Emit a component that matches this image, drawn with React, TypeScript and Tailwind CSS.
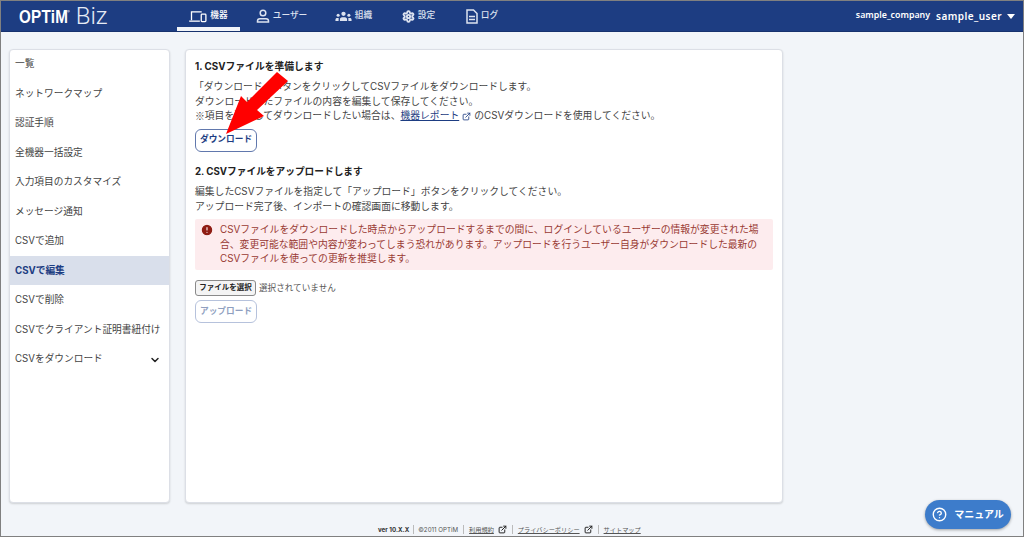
import React from "react";
import { ChevronDown, ExternalLink, CircleHelp, CircleAlert } from "lucide-react";

const font = "font-['Inter','Noto_Sans_CJK_JP',sans-serif]";

function DeviceIcon() {
  return (
    <svg width="18" height="13" viewBox="0 0 19 14" fill="none" stroke="currentColor" strokeWidth="1.4">
      <path d="M2.5 11V2h11" />
      <path d="M0 12h11.5" />
      <rect x="13" y="4.5" width="5" height="8" rx="0.8" />
    </svg>
  );
}
function UserIcon() {
  return (
    <svg width="14" height="14" viewBox="0 0 14 14" fill="none" stroke="currentColor" strokeWidth="1.5">
      <circle cx="7" cy="4" r="2.8" />
      <path d="M1.5 13v-1c0-1.4 1-2.3 2.4-2.3h6.2c1.4 0 2.4.9 2.4 2.3v1z" />
    </svg>
  );
}
function OrgIcon() {
  return (
    <svg width="17" height="11" viewBox="0 0 19 12" fill="currentColor">
      <circle cx="9.5" cy="3" r="2.4" />
      <circle cx="3.5" cy="4.5" r="1.7" />
      <circle cx="15.5" cy="4.5" r="1.7" />
      <path d="M5.5 11V9.5c0-1.6 1-2.6 2.4-2.6h3.2c1.4 0 2.4 1 2.4 2.6V11z" />
      <path d="M0.5 11V9.8c0-1.3.8-2 2-2h1.6L4 11z" />
      <path d="M18.5 11V9.8c0-1.3-.8-2-2-2h-1.6L15 11z" />
    </svg>
  );
}
function GearIcon() {
  return (
    <svg width="13" height="13" viewBox="0 0 24 24" fill="none" stroke="currentColor" strokeWidth="3.4">
      <path d="M12.22 2h-.44a2 2 0 0 0-2 2v.18a2 2 0 0 1-1 1.73l-.43.25a2 2 0 0 1-2 0l-.15-.08a2 2 0 0 0-2.73.73l-.22.38a2 2 0 0 0 .73 2.73l.15.1a2 2 0 0 1 1 1.72v.51a2 2 0 0 1-1 1.74l-.15.09a2 2 0 0 0-.73 2.73l.22.38a2 2 0 0 0 2.73.73l.15-.08a2 2 0 0 1 2 0l.43.25a2 2 0 0 1 1 1.73V20a2 2 0 0 0 2 2h.44a2 2 0 0 0 2-2v-.18a2 2 0 0 1 1-1.73l.43-.25a2 2 0 0 1 2 0l.15.08a2 2 0 0 0 2.73-.73l.22-.39a2 2 0 0 0-.73-2.73l-.15-.08a2 2 0 0 1-1-1.74v-.5a2 2 0 0 1 1-1.74l.15-.09a2 2 0 0 0 .73-2.73l-.22-.38a2 2 0 0 0-2.73-.73l-.15.08a2 2 0 0 1-2 0l-.43-.25a2 2 0 0 1-1-1.73V4a2 2 0 0 0-2-2z" />
      <circle cx="12" cy="12" r="3" />
    </svg>
  );
}
function LogIcon() {
  return (
    <svg width="12" height="15" viewBox="0 0 12 15" fill="none" stroke="currentColor" strokeWidth="1.5">
      <path d="M1 1h6.5L11 4.5V14H1z" />
      <path d="M3 7.5h6M3 10.5h6" />
    </svg>
  );
}

const nav = [
  { label: "機器", icon: <DeviceIcon />, w: "w-[63px]", active: true },
  { label: "ユーザー", icon: <UserIcon />, w: "w-[83px]" },
  { label: "組織", icon: <OrgIcon />, w: "w-[61px]" },
  { label: "設定", icon: <GearIcon />, w: "w-[69px]" },
  { label: "ログ", icon: <LogIcon />, w: "w-[58px]" },
];

const side = [
  "一覧",
  "ネットワークマップ",
  "認証手順",
  "全機器一括設定",
  "入力項目のカスタマイズ",
  "メッセージ通知",
  "CSVで追加",
  "CSVで編集",
  "CSVで削除",
  "CSVでクライアント証明書紐付け",
  "CSVをダウンロード",
];

export default function App() {
  return (
    <div className={`${font} relative h-[537px] w-[1024px] overflow-hidden border border-[#808080] bg-[#f2f5f9] text-[#333]`}>
      <header className="flex h-[31px] items-stretch border-b border-[#17326e] bg-[#1d3d82] text-white">
        <div className="flex w-[176px] items-center pl-[18px]">
          <span className="inline-block w-[48px] origin-left scale-x-[0.8] whitespace-nowrap font-['Liberation_Sans',sans-serif] text-[19px] font-bold leading-none tracking-[0.3px]">OPTiM</span>
          <span className="mb-2 text-[4px]">®</span>
          <span className="ml-[6px] font-['Roboto',sans-serif] text-[24px] font-light leading-none text-[#e6ebf5]">Biz</span>
        </div>
        <nav className="flex">
          {nav.map((n) => (
            <div
              key={n.label}
              className={`flex ${n.w} items-center justify-center gap-[3px] text-[8.7px] font-medium ${n.active ? "border-b-[4px] border-[#f2f5f9] pt-1" : "text-[#dde3f0]"}`}
            >
              {n.icon}
              <span>{n.label}</span>
            </div>
          ))}
        </nav>
        <div className="ml-auto flex items-center pr-[8px] font-['Noto_Sans',sans-serif] font-semibold">
          <span className="text-[8.8px]">sample_company</span>
          <span className="ml-[6px] text-[10px] tracking-[0.45px]">sample_user</span>
          <span className="ml-[5px] h-0 w-0 border-x-[4px] border-t-[5px] border-x-transparent border-t-white" />
        </div>
      </header>

      <main className="flex items-start px-[8px] pt-[17px]">
        <aside className="h-[454px] w-[161px] overflow-hidden rounded border border-[#dcdfe6] bg-white shadow-[0_1px_2px_rgba(0,0,0,0.15)]">
          <div className="-mt-px">
            {side.map((s) => {
              const on = s === "CSVで編集";
              const last = s === "CSVをダウンロード";
              return (
                <div
                  key={s}
                  className={`flex h-[29.5px] items-center justify-between pl-[5px] pr-[8px] pt-[1.5px] text-[9.7px] ${on ? "bg-[#d9dfeb] font-bold text-[#1d3d82]" : "text-[#444]"}`}
                >
                  <span className="whitespace-nowrap">{s}</span>
                  {last && <ChevronDown size={12} strokeWidth={3} className="text-[#222]" />}
                </div>
              );
            })}
          </div>
        </aside>

        <section className="ml-[15px] h-[454px] w-[598px] rounded border border-[#dcdfe6] bg-white px-[9px] pt-[9px] shadow-[0_1px_2px_rgba(0,0,0,0.15)]">
          <h2 className="text-[9.8px] font-bold leading-[15px] text-[#222]">1. CSVファイルを準備します</h2>
          <div className="mt-[6px] text-[9.8px] leading-[14.5px] text-[#444]">
            <p className="-ml-[1px]">「ダウンロード」ボタンをクリックしてCSVファイルをダウンロードします。</p>
            <p>ダウンロードしたファイルの内容を編集して保存してください。</p>
            <p className="flex items-center">
              <span className="font-['Noto_Sans_CJK_JP',sans-serif]">※</span>項目を選択してダウンロードしたい場合は、
              <span className="underline text-[#1d3d82]">機器レポート</span>
              <ExternalLink size={9} strokeWidth={2.2} className="mx-[3px] text-[#1d3d82]" />
              のCSVダウンロードを使用してください。
            </p>
          </div>
          <button className="mt-[5px] flex h-[23px] w-[62px] items-center justify-center rounded-[6px] border border-[#6178ad] bg-white text-[8.7px] font-bold text-[#1d3d82]">
            ダウンロード
          </button>

          <h2 className="mt-[12.5px] text-[9.7px] font-bold leading-[15px] text-[#222]">2. CSVファイルをアップロードします</h2>
          <div className="mt-[6px] text-[9.8px] leading-[14.5px] text-[#444]">
            <p>編集したCSVファイルを指定して「アップロード」ボタンをクリックしてください。</p>
            <p>アップロード完了後、インポートの確認画面に移動します。</p>
          </div>
          <div className="mt-[5px] flex h-[51px] items-start rounded-[2px] bg-[#fdecee] pl-[5px] pt-[4px] text-[9.8px] leading-[14.5px] text-[#993a33]">
            <CircleAlert size={14} fill="#8f1d14" stroke="#fdecee" strokeWidth={2} className="-mt-[0.5px] shrink-0" />
            <p className="ml-[6px] w-[545px]">
              CSVファイルをダウンロードした時点からアップロードするまでの間に、ログインしているユーザーの情報が変更された場合、変更可能な範囲や内容が変わってしまう恐れがあります。アップロードを行うユーザー自身がダウンロードした最新のCSVファイルを使っての更新を推奨します。
            </p>
          </div>
          <div className="mt-[10px] flex items-center">
            <button className="flex h-[16px] w-[61px] items-center justify-center rounded-[3px] border border-[#8a8a8a] bg-[#f4f4f4] text-[7.5px] font-bold text-[#222]">
              ファイルを選択
            </button>
            <span className="ml-[3px] text-[8.6px] text-[#555]">選択されていません</span>
          </div>
          <button className="mt-[4px] flex h-[23px] w-[62px] items-center justify-center rounded-[6px] border border-[#b6c2dc] bg-white text-[8.7px] font-bold text-[#8f9fc0]">
            アップロード
          </button>
        </section>
      </main>

      <footer className="absolute bottom-[2px] left-[377px] flex items-center whitespace-nowrap text-[6.2px] text-[#555]">
        <span className="font-bold text-[#333]">ver 10.X.X</span>
        <span className="mx-[4px] h-[9px] w-px bg-[#bbb]" />
        <span>©2011 OPTiM</span>
        <span className="mx-[5px] h-[9px] w-px bg-[#bbb]" />
        <span className="underline">利用規約</span>
        <ExternalLink size={9} strokeWidth={2.6} className="ml-[4px] text-[#222]" />
        <span className="mx-[5px] h-[9px] w-px bg-[#bbb]" />
        <span className="underline">プライバシーポリシー</span>
        <ExternalLink size={9} strokeWidth={2.6} className="ml-[4px] text-[#222]" />
        <span className="mx-[5px] h-[9px] w-px bg-[#bbb]" />
        <span className="underline">サイトマップ</span>
      </footer>

      <div className="absolute left-[924px] top-[499px] flex h-[29px] w-[86px] items-center justify-center gap-[7px] rounded-full bg-[#3d7ccb] text-[10px] font-bold text-white shadow-[0_1px_3px_rgba(0,0,0,0.35)]">
        <CircleHelp size={15} strokeWidth={2.2} />
        <span>マニュアル</span>
      </div>

      <svg className="absolute -left-px -top-px" width="1024" height="537" viewBox="0 0 1024 537" fill="#ff0000">
        <polygon points="277,72 288,81 257,110 264,116 226,134 241,96 247,102" />
      </svg>
    </div>
  );
}
